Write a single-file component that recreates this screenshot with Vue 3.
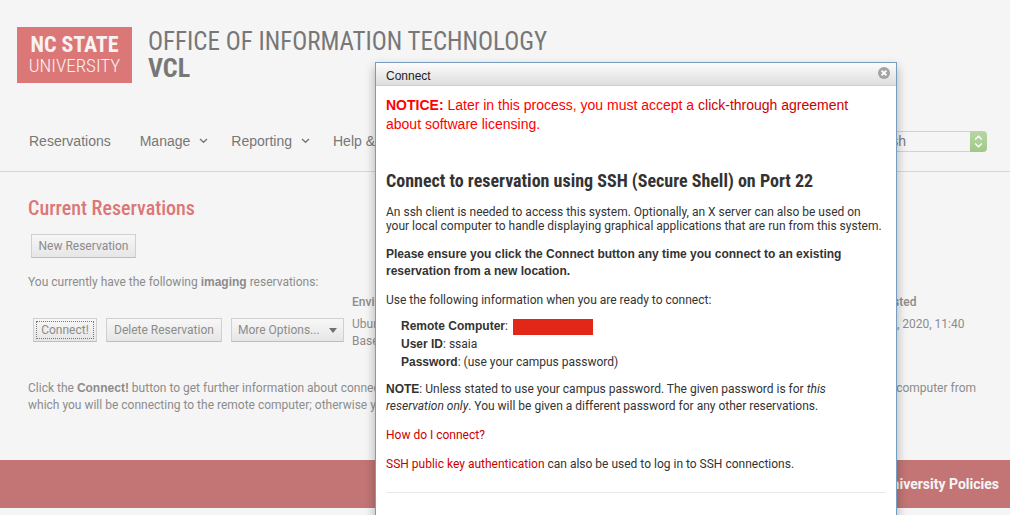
<script setup>
const menus = [
  { label: 'Reservations', open: false },
  { label: 'Manage', open: true },
  { label: 'Reporting', open: true },
  { label: 'Help & Support', open: false },
]
</script>

<template>
  <div class="page">
    <header class="top">
      <div class="brand">
        <a class="logo" href="#"><strong>NC STATE</strong><span>UNIVERSITY</span></a>
        <div class="unit">
          <div class="office">OFFICE OF INFORMATION TECHNOLOGY</div>
          <div class="vcl">VCL</div>
        </div>
      </div>
      <div class="navbar">
        <nav class="menus">
          <a v-for="m in menus" :key="m.label" class="menu" href="#">
            {{ m.label }}
            <svg v-if="m.open" width="9" height="6" viewBox="0 0 9 6"><path d="M1 1l3.5 3.3L8 1" fill="none" stroke="#777" stroke-width="1.4" /></svg>
          </a>
        </nav>
        <div class="language">
          <select aria-label="Language"><option>English</option></select>
          <span class="stepper">
            <svg width="9" height="13" viewBox="0 0 9 13"><path d="M1.2 4.5l3.3-3.2 3.3 3.2M1.2 8.5l3.3 3.2 3.3-3.2" fill="none" stroke="#fff" stroke-width="1.4" /></svg>
          </span>
        </div>
      </div>
    </header>

    <main class="content">
      <h1>Current Reservations</h1>
      <button class="btn new" type="button">New Reservation</button>
      <p class="intro">You currently have the following <b>imaging</b> reservations:</p>
      <table>
        <thead>
          <tr><td class="actions"></td><th class="env">Environment</th><th class="start">Starting</th><th class="requested">Initially requested</th></tr>
        </thead>
        <tbody>
          <tr>
            <td class="actions">
              <div class="buttons">
                <button class="btn focused" type="button">Connect!</button>
                <button class="btn" type="button">Delete Reservation</button>
                <button class="btn more" type="button">More Options... <i></i></button>
              </div>
            </td>
            <td>Ubuntu 18.04 LTS<br>Base</td>
            <td>Now</td>
            <td>Monday, Apr 6, 2020, 11:40</td>
          </tr>
        </tbody>
      </table>
      <p class="hint">Click the <b>Connect!</b> button to get further information about connecting to the reserved systems. You must click the button from a web browser running on the same computer from which you will be connecting to the remote computer; otherwise you may be denied access to the machine.</p>
    </main>

    <footer><a href="#">University Policies</a></footer>

    <section class="dialog" role="dialog" aria-labelledby="dialog-title">
      <div class="titlebar">
        <span id="dialog-title">Connect</span>
        <button class="close" type="button" aria-label="Close">
          <svg width="12" height="12" viewBox="0 0 12 12"><circle cx="6" cy="6" r="6" fill="#a3a3a3" /><path d="M3.6 3.6l4.8 4.8M8.4 3.6L3.6 8.4" stroke="#fff" stroke-width="2" /></svg>
        </button>
      </div>
      <div class="body">
        <p class="notice"><b>NOTICE:</b> Later in this process, you must accept a <a href="#">click-through agreement</a> about software licensing.</p>
        <h2>Connect to reservation using SSH (Secure Shell) on Port 22</h2>
        <p class="tight">An ssh client is needed to access this system. Optionally, an X server can also be used on your local computer to handle displaying graphical applications that are run from this system.</p>
        <p><b>Please ensure you click the Connect button any time you connect to an existing reservation from a new location.</b></p>
        <p>Use the following information when you are ready to connect:</p>
        <ul>
          <li><b>Remote Computer</b>: <span class="redacted"></span></li>
          <li><b>User ID</b>: ssaia</li>
          <li><b>Password</b>: (use your campus password)</li>
        </ul>
        <p><b>NOTE</b>: Unless stated to use your campus password. The given password is for <em>this reservation only</em>. You will be given a different password for any other reservations.</p>
        <p><a href="#">How do I connect?</a></p>
        <p><a href="#">SSH public key authentication</a> can also be used to log in to SSH connections.</p>
        <hr>
      </div>
    </section>
  </div>
</template>

<style>
body { margin: 0; background: #f5f5f5; overflow: hidden; }
</style>

<style scoped>
* { box-sizing: border-box; }
.page {
  position: relative;
  height: 100vh;
  overflow: hidden;
  background: #f5f5f5;
  color: #8c8c8c;
  font: 12px/17px Roboto, "Liberation Sans", sans-serif;
}
a { text-decoration: none; color: inherit; }
p, h1, h2, ul { margin: 0; padding: 0; }
b { font-family: "Liberation Sans", sans-serif; line-height: 1; }
.top { border-bottom: 1px solid #d6d6d6; padding-top: 27px; }
.brand { display: flex; gap: 16px; padding-left: 17px; font-family: "Roboto Condensed", "Liberation Sans Narrow", sans-serif; }
.logo {
  width: 115px; height: 56px; padding-top: 7px;
  background: #dc7777; color: #f8f2f2;
  display: flex; flex-direction: column; align-items: center;
  font-size: 19px; line-height: 21px; font-weight: 300;
}
.logo strong { font-size: 22px; font-weight: 700; }
.unit { color: #777; font-size: 26px; line-height: 27px; padding-top: 1px; }
.office { font-size: 25px; font-weight: 400; white-space: nowrap; }
.vcl { font-weight: bold; }
.navbar { display: flex; justify-content: space-between; align-items: center; height: 60px; margin: 28px 23px 0 29px; }
.menus { display: flex; gap: 29px; font-family: "Liberation Sans", sans-serif; font-size: 14px; color: #777; }
.menu { display: flex; align-items: center; gap: 9px; white-space: nowrap; }
.menu svg { margin-right: -6px; }
.language { display: flex; width: 140px; height: 21px; }
.language select {
  appearance: none; flex: 1; min-width: 0; border: 1px solid #d2d2d2; border-right: 0;
  border-radius: 0; background: #f5f5f5; padding: 0 0 0 12px; color: #7b7b7b;
  font: 14px "Liberation Sans", sans-serif;
}
.stepper { width: 17px; display: grid; place-items: center; border-radius: 0 4px 4px 0; background: linear-gradient(#b9d5a6, #9fc988); }
.content { padding: 23px 29px 0 28px; }
h1 { font: 500 20px/26px "Roboto Condensed", "Liberation Sans Narrow", sans-serif; color: #dc7777; }
.btn {
  height: 24px; padding: 0 6px; white-space: nowrap;
  border: 1px solid #d0d0d0; border-bottom-color: #bebebe;
  background: linear-gradient(#f7f7f7, #e6e6e6);
  color: #8c8c8c; font: 12px Roboto, sans-serif;
}
.new { display: block; width: 105px; margin: 13px 0 0 3px; }
.intro { margin-top: 16px; }
table { width: 100%; margin-top: 3px; border-collapse: collapse; table-layout: fixed; }
td, th { padding: 0; text-align: left; vertical-align: top; font-weight: 400; white-space: nowrap; }
th { font-weight: 500; height: 22px; }
.actions { width: 324px; }
.env { width: 229px; }
.start { width: 240px; }
.buttons { display: flex; gap: 9px; padding: 2px 0 0 5px; }
.buttons .btn:nth-child(1) { width: 64px; }
.buttons .btn:nth-child(2) { width: 116px; }
.buttons .btn:nth-child(3) { width: 113px; }
.focused { outline: 1px dotted #777; outline-offset: -4px; }
.more { display: flex; align-items: center; justify-content: space-between; }
.more i { border: 4px solid transparent; border-top: 5px solid #707070; border-bottom: 0; }
.hint { margin-top: 30px; }
footer {
  margin-top: 46px; height: 48px; padding-right: 11px;
  display: flex; justify-content: flex-end; align-items: center;
  background: #c37575; color: #f5f5f5; font-size: 14px; font-weight: bold;
}
.dialog {
  position: absolute; top: 62px; bottom: -40px; left: 375px; width: 522px;
  border: 1px solid #769dc0; background: #fff; color: #333;
  box-shadow: 0 5px 10px rgba(0, 0, 0, .3);
}
.titlebar {
  display: flex; justify-content: space-between; align-items: flex-start;
  height: 23px; padding: 4px 6px 0 10px; border-bottom: 1px solid #ccc;
  background: linear-gradient(#fcfcfc, #dedede); color: #222;
  font-family: "Liberation Sans", sans-serif; line-height: 18px;
}
.close { width: 12px; height: 12px; padding: 0; border: 0; background: none; }
.close svg { display: block; }
.body { padding: 10px 10px 0; }
.body p { margin-bottom: 12px; }
.body a { color: #c00; }
.body .notice { color: #f00; font-family: "Liberation Sans", sans-serif; font-size: 14px; line-height: 19px; margin-bottom: 35px; }
h2 { font: bold 18px/24px "Roboto Condensed", "Liberation Sans Narrow", sans-serif; margin-bottom: 12px; }
.body .tight { line-height: 14px; margin-bottom: 13px; }
ul { list-style: none; padding-left: 15px; margin: -4px 0 10px; }
li { line-height: 18px; }
.redacted { display: inline-block; width: 80px; height: 16px; margin-left: 2px; background: #e22718; vertical-align: middle; }
hr { margin: 19px 0 0; border: 0; border-top: 1px solid #e9e9e9; }
</style>
